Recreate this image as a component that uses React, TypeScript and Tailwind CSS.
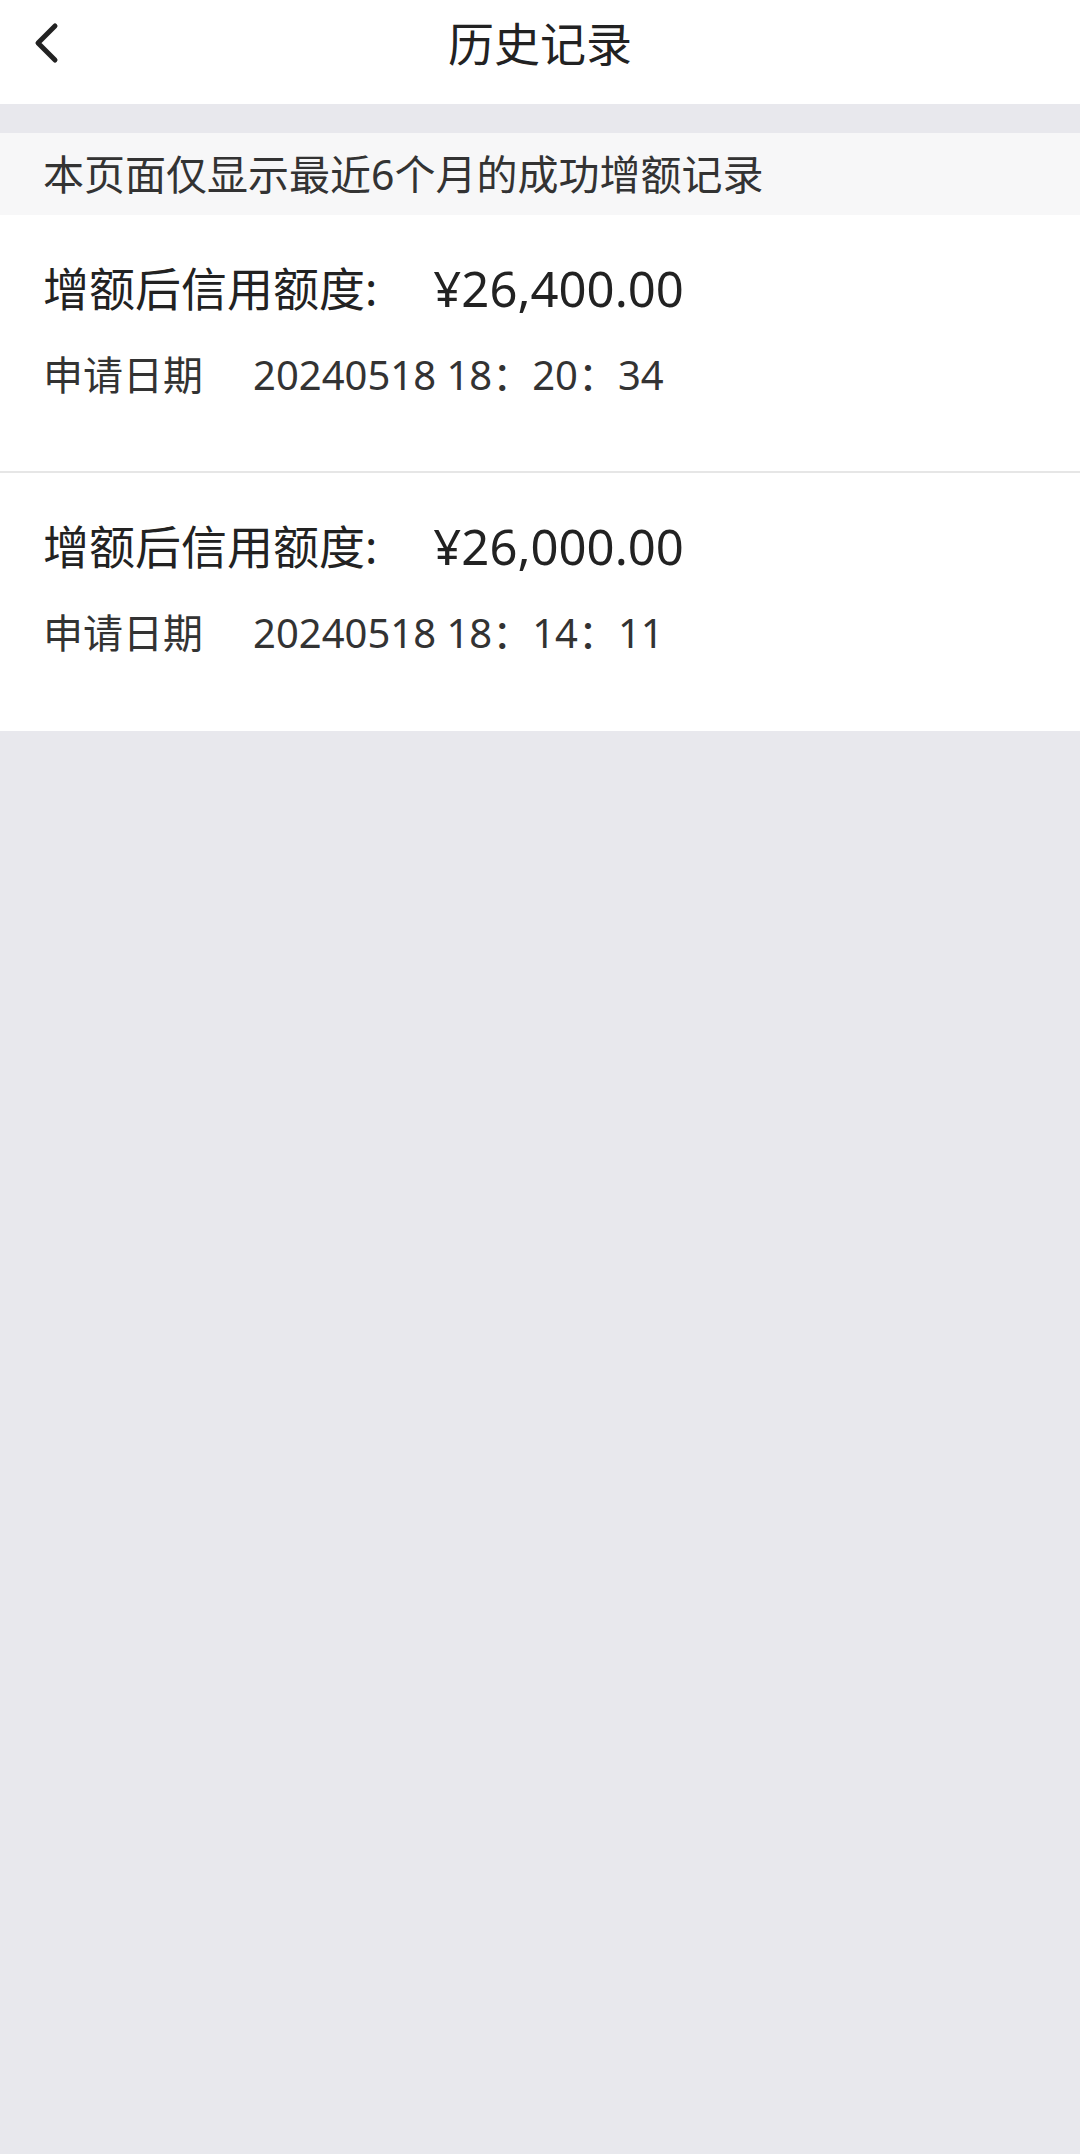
const font = { fontFamily: '"Noto Sans", "Noto Sans CJK SC", sans-serif' }

const records = [
  { amount: "¥26,400.00", date: "20240518 18：20：34" },
  { amount: "¥26,000.00", date: "20240518 18：14：11" },
]

function BackIcon() {
  return (
    <svg width="28" height="42" viewBox="0 0 28 42" fill="none">
      <path d="M23 4 L6 21 L23 38" stroke="#222" strokeWidth="5" strokeLinecap="round" strokeLinejoin="round" />
    </svg>
  )
}

export default function App() {
  return (
    <div className="min-h-[2154px] bg-[#e8e8ed] flex flex-col text-[#222]" style={font}>
      {/* Header */}
      <div className="h-[104px] bg-white relative flex items-center justify-center pb-[18px]">
        <div className="absolute left-[32px] top-[22px]">
          <BackIcon />
        </div>
        <h1 className="text-[46px] leading-none text-[#222]">历史记录</h1>
      </div>

      <div className="h-[29px]" />

      {/* Note */}
      <div className="h-[82px] bg-[#f7f7f8] flex items-center px-[43px]">
        <p className="text-[41px] leading-none text-[#333]">本页面仅显示最近6个月的成功增额记录</p>
      </div>

      {/* Records */}
      <div className="bg-white">
        {records.map((r, i) => (
          <div
            key={i}
            className={`h-[258px] px-[43px] pt-[45px] ${i === 0 ? "border-b-2 border-[#e6e6e6]" : ""}`}
          >
            <div className="flex items-center h-[56px] text-[46px] leading-none text-[#222]">
              <span>增额后信用额度:</span>
              <span className="ml-[56px] text-[49px]">{r.amount}</span>
            </div>
            <div className="flex items-center h-[48px] mt-[35px] text-[40px] leading-none text-[#333]">
              <span>申请日期</span>
              <span className="ml-[50px]">{r.date}</span>
            </div>
          </div>
        ))}
      </div>
    </div>
  )
}
